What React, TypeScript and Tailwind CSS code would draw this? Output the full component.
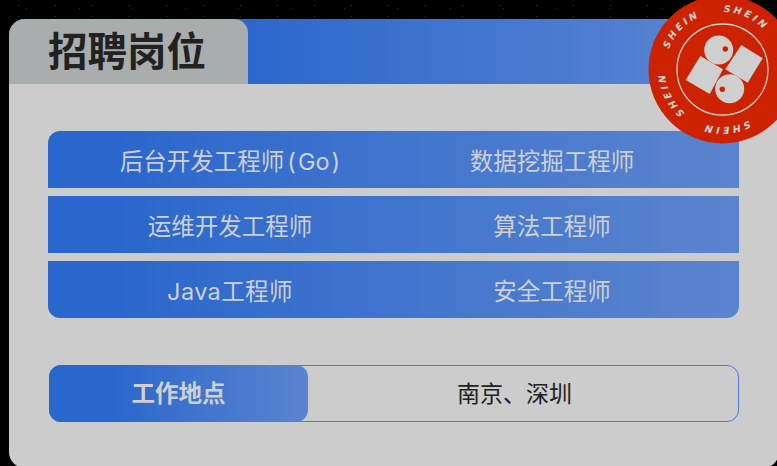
import React from "react";

const rows: [React.ReactNode, string][] = [
  [
    <>
      后台开发工程师<span className="ml-[3px] mr-[2px]">(</span>Go<span className="ml-[2px]">)</span>
    </>,
    "数据挖掘工程师",
  ],
  [<>运维开发工程师</>, "算法工程师"],
  [<span className="tracking-[0.4px]">Java工程师</span>, "安全工程师"],
];

function Stamp() {
  const cx = 722.5;
  const cy = 69.5;
  return (
    <svg
      className="absolute left-[640px] top-[-10px] w-[170px] h-[170px]"
      viewBox="640 -10 170 170"
    >
      <defs>
        <path id="arc" d={`M ${cx} ${cy - 57.5} A 57.5 57.5 0 0 1 ${cx + 57.5} ${cy}`} fill="none" />
      </defs>
      <circle cx={cx} cy={cy} r={74} fill="#cc2200" />
      <circle cx={cx} cy={cy} r={45.5} fill="none" stroke="#d6d0cc" strokeWidth={1.3} />
      <circle cx={718.7} cy={50} r={14.5} fill="#cfcfcf" />
      <circle cx={725.3} cy={49} r={2.7} fill="#cc2200" />
      <circle cx={729.7} cy={88.7} r={14.5} fill="#cfcfcf" />
      <circle cx={722.3} cy={89.3} r={2.7} fill="#cc2200" />
      <polygon points="741.3,45 762.7,58.3 747.7,82.7 725.3,69.3" fill="#cfcfcf" />
      <polygon points="700.3,56 723,69.3 709.7,94 685.7,80" fill="#cfcfcf" />
      {[1, 153, 221, 291].map((a) => (
        <text
          key={a}
          transform={`rotate(${a} ${cx} ${cy})`}
          fill="#dcd8d4"
          fontFamily="'DejaVu Sans', sans-serif"
          fontWeight={700}
          fontStyle="italic"
          fontSize={9.5}
        >
          <textPath href="#arc" textLength={44} lengthAdjust="spacing">
            SHEIN
          </textPath>
        </text>
      ))}
    </svg>
  );
}

export default function App() {
  return (
    <div className="relative w-[777px] h-[466px] overflow-hidden bg-black bg-[radial-gradient(circle,#333333_0.5px,transparent_1px),radial-gradient(circle,#2a2a2a_0.5px,transparent_1px)] bg-[length:37px_11px,53px_17px] pt-[19px] pl-[9px] font-['Inter','Noto_Sans_CJK_SC',sans-serif]">
      <div className="w-[770px] h-[449px] rounded-[16px] bg-[#cccccc] overflow-hidden">
        <div className="h-[65px] bg-gradient-to-r from-[#2a67cc] from-[30%] to-[#5f88d2]">
          <div className="w-[239px] h-[65px] rounded-t-[14px] bg-[#a9adad] pl-[39px] pt-[3px] flex items-center">
            <span className="text-[39.5px] leading-none font-bold text-[#222222]">招聘岗位</span>
          </div>
        </div>
        <div className="pl-[39px] pt-[47px] w-[730px]">
          <div className="flex flex-col gap-2 rounded-xl overflow-hidden">
            {rows.map((r) => (
              <div
                key={r[1]}
                className="h-[57px] pt-[5px] grid grid-cols-[364px_280px] items-center bg-gradient-to-r from-[#2a67cc] from-[10%] to-[#5a84ce] text-[23.5px] leading-none text-[#cdd0d6]"
              >
                <div className="text-center">{r[0]}</div>
                <div className="text-center">{r[1]}</div>
              </div>
            ))}
          </div>
          <div className="mt-[47px] ml-px h-[57px] flex rounded-xl border border-[#4a7cd6]">
            <div className="w-[259px] -my-px -ml-px pt-px rounded-xl bg-gradient-to-r from-[#2a67cc] from-[25%] to-[#5a84ce] flex items-center justify-center text-[23.5px] font-bold leading-none text-[#d0d0d0]">
              工作地点
            </div>
            <div className="flex-1 pt-px flex items-center justify-center text-[23px] leading-none text-[#222222] pr-[17px]">
              南京、深圳
            </div>
          </div>
        </div>
      </div>
      <Stamp />
    </div>
  );
}
